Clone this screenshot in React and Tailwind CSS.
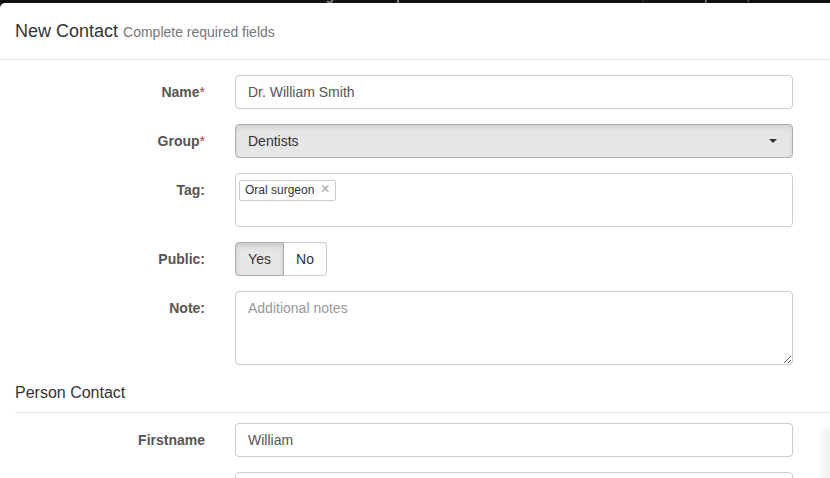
import { useState } from 'react';

const FormRow = ({ label, required, children, className = '' }) => (
  <div className={`flex mb-[15px] ${className}`}>
    <label className="w-[205px] shrink-0 text-right pt-[7px] text-[14px] font-bold text-[#555] leading-[20px]">
      {label}
      {required && <span className="text-[#a94442] font-normal">*</span>}
    </label>
    <div className="ml-[30px] w-[558px]">{children}</div>
  </div>
);

const App = () => {
  const [isPublic, setIsPublic] = useState(true);

  return (
    <div className="relative w-[830px] h-[478px] overflow-hidden bg-[#111] font-['Liberation_Sans',Arial,sans-serif]">
      <div className="h-[3px] overflow-hidden">
        <div className="flex items-center -mt-[12px] h-[14px] text-[14px] font-bold text-[#888] whitespace-nowrap">
          <span className="-ml-[10px] w-[85px]">Patients</span>
          <span className="w-[90px]">Patient</span>
          <span className="w-[103px]">Location</span>
          <span className="w-[110px]">Marketing</span>
          <span className="w-[89px]">Report</span>
          <span className="w-[176px]">Inbox</span>
          <span className="border-l border-[#333] pl-[12px] font-normal">Search patient, card no</span>
        </div>
      </div>

      <div className="bg-white rounded-tl-[5px] h-full">
        <div className="h-[57px] px-[15px] flex items-center border-b border-[#e5e5e5]">
          <h4 className="text-[18px] text-[#333] leading-[26px]">
            New Contact <small className="text-[14px] text-[#777]">Complete required fields</small>
          </h4>
        </div>

        <div className="pt-[15px]">
          <FormRow label="Name" required>
            <input
              defaultValue="Dr. William Smith"
              className="w-full h-[34px] px-[12px] border border-[#ccc] rounded-[4px] text-[14px] text-[#555] outline-none"
            />
          </FormRow>

          <FormRow label="Group" required>
            <div className="w-full h-[34px] px-[12px] flex items-center justify-between bg-[#e6e6e6] border border-[#adadad] rounded-[4px] text-[14px] text-[#333] shadow-[inset_0_3px_5px_rgba(0,0,0,0.08)]">
              <span>Dentists</span>
              <span className="w-0 h-0 border-x-[4px] border-x-transparent border-t-[4px] border-t-[#333] mr-[3px]" />
            </div>
          </FormRow>

          <FormRow label="Tag:">
            <div className="w-full h-[54px] border border-[#ccc] rounded-[4px] p-[3px]">
              <span className="inline-flex items-center h-[21px] px-[5px] border border-[#ccc] rounded-[2px] text-[12px] text-[#333] leading-none">
                Oral surgeon
                <span className="ml-[6px] text-[#aaa] text-[16px] leading-none -mt-[3px]">×</span>
              </span>
            </div>
          </FormRow>

          <FormRow label="Public:">
            <div className="flex text-[14px]">
              <button
                onClick={() => setIsPublic(true)}
                className={`h-[34px] w-[49px] border rounded-l-[4px] ${isPublic ? 'bg-[#e6e6e6] border-[#adadad] text-[#333] shadow-[inset_0_3px_5px_rgba(0,0,0,0.125)]' : 'bg-white border-[#ccc] text-[#333]'}`}
              >
                Yes
              </button>
              <button
                onClick={() => setIsPublic(false)}
                className={`h-[34px] w-[43px] border border-l-0 rounded-r-[4px] ${!isPublic ? 'bg-[#e6e6e6] border-[#adadad] text-[#333]' : 'bg-white border-[#ccc] text-[#333]'}`}
              >
                No
              </button>
            </div>
          </FormRow>

          <FormRow label="Note:" className="mb-[15px]">
            <textarea
              rows={3}
              placeholder="Additional notes"
              className="block w-full h-[74px] px-[12px] py-[6px] border border-[#ccc] rounded-[4px] text-[14px] text-[#555] placeholder:text-[#999] outline-none leading-[20px]"
            />
          </FormRow>

          <div className="pl-[15px]">
            <h4 className="text-[16px] text-[#333] leading-[20px] pt-[3px] pb-[9px] border-b border-[#e5e5e5]">
              Person Contact
            </h4>
          </div>

          <div className="pt-[10px]">
            <FormRow label="Firstname">
              <input
                defaultValue="William"
                className="w-full h-[34px] px-[12px] border border-[#ccc] rounded-[4px] text-[14px] text-[#555] outline-none"
              />
            </FormRow>
            <FormRow label="">
              <input className="w-full h-[34px] px-[12px] border border-[#ccc] rounded-[4px] text-[14px] text-[#555] outline-none" />
            </FormRow>
          </div>
        </div>
      </div>

      <div className="absolute right-0 top-[428px] w-[10px] h-[60px] bg-gradient-to-r from-transparent to-[#e8e8e8] blur-[2px]" />
    </div>
  );
};

export default App;
